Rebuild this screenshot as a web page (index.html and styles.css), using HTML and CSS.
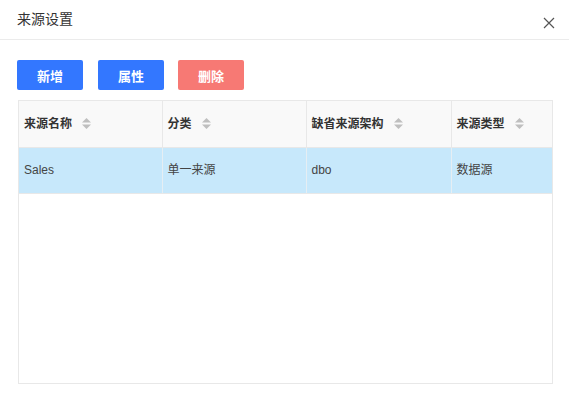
FILE: index.html
```html
<!DOCTYPE html>
<html lang="zh-CN">
<head>
  <meta charset="UTF-8" />
  <title>来源设置</title>
  <link rel="stylesheet" href="styles.css">
</head>
<body>
  <div class="dialog">
    <div class="dialog-header">
      <span class="dialog-title">来源设置</span>
      <svg class="close" width="12" height="12" viewBox="0 0 12 12">
        <path d="M1 1L11 11M11 1L1 11" stroke="#555" stroke-width="1.2" fill="none" />
      </svg>
    </div>
    <div class="dialog-body">
      <div class="toolbar">
        <button class="btn btn-primary">新增</button>
        <button class="btn btn-primary">属性</button>
        <button class="btn btn-danger">删除</button>
      </div>
      <div class="grid">
        <table>
          <colgroup>
            <col style="width:143px">
            <col style="width:144px">
            <col style="width:145px">
            <col>
          </colgroup>
          <thead>
            <tr>
              <th>来源名称<span class="sort"><svg width="9" height="11" viewBox="0 0 9 11"><path d="M0 4.5L4.5 0L9 4.5Z M0 6.5L4.5 11L9 6.5Z" fill="#bfbfbf"/></svg></span></th>
              <th>分类<span class="sort"><svg width="9" height="11" viewBox="0 0 9 11"><path d="M0 4.5L4.5 0L9 4.5Z M0 6.5L4.5 11L9 6.5Z" fill="#bfbfbf"/></svg></span></th>
              <th>缺省来源架构<span class="sort"><svg width="9" height="11" viewBox="0 0 9 11"><path d="M0 4.5L4.5 0L9 4.5Z M0 6.5L4.5 11L9 6.5Z" fill="#bfbfbf"/></svg></span></th>
              <th>来源类型<span class="sort"><svg width="9" height="11" viewBox="0 0 9 11"><path d="M0 4.5L4.5 0L9 4.5Z M0 6.5L4.5 11L9 6.5Z" fill="#bfbfbf"/></svg></span></th>
            </tr>
          </thead>
          <tbody>
            <tr class="selected">
              <td>Sales</td>
              <td>单一来源</td>
              <td>dbo</td>
              <td>数据源</td>
            </tr>
          </tbody>
        </table>
      </div>
    </div>
  </div>
</body>
</html>
```

FILE: styles.css
```css
body {
  margin: 0;
  background: #fff;
  font-family: "Liberation Sans", "Noto Sans CJK SC", sans-serif;
  color: #333;
}

.dialog {
  width: 569px;
  height: 398px;
  background: #fff;
}

.dialog-header {
  height: 40px;
  border-bottom: 1px solid #ebebeb;
  display: flex;
  align-items: center;
  justify-content: space-between;
  padding: 0 14px 0 17px;
  box-sizing: border-box;
}

.dialog-title {
  font-size: 14px;
  color: #333;
  margin-top: -4px;
}

.close {
  margin-top: 6px;
}

.dialog-body {
  padding: 20px 16px 0 18px;
}

.toolbar {
  display: flex;
  gap: 14px;
  margin: 0 0 10px -1px;
}

.btn {
  width: 66px;
  height: 30px;
  border: none;
  border-radius: 2px;
  color: #fff;
  font-family: "Liberation Sans", "Noto Sans CJK SC", sans-serif;
  font-size: 13px;
  font-weight: bold;
  cursor: pointer;
  padding: 0;
}

.btn-primary {
  background: #3377ff;
}

.btn-primary + .btn-primary {
  margin-left: 1px;
}

.btn-danger {
  background: #f77974;
}

.grid {
  width: 535px;
  height: 284px;
  border: 1px solid #e8e8e8;
  box-sizing: border-box;
}

table {
  width: 100%;
  border-collapse: collapse;
  table-layout: fixed;
  font-size: 12px;
}

th,
td {
  height: 46px;
  padding: 0 5px;
  line-height: 16px;
  text-align: left;
  border-right: 1px solid #e8e8e8;
  border-bottom: 1px solid #e8e8e8;
  white-space: nowrap;
  box-sizing: border-box;
}

th:last-child,
td:last-child {
  border-right: none;
}

th {
  background: #f9f9f9;
  font-weight: bold;
  color: #333;
}

td {
  color: #444;
}

.selected td {
  background: #c7e8fb;
  border-right-color: #e6eef3;
}

.sort {
  display: inline-block;
  vertical-align: middle;
  margin-left: 10px;
  line-height: 0;
  margin-top: -2px;
}
```
